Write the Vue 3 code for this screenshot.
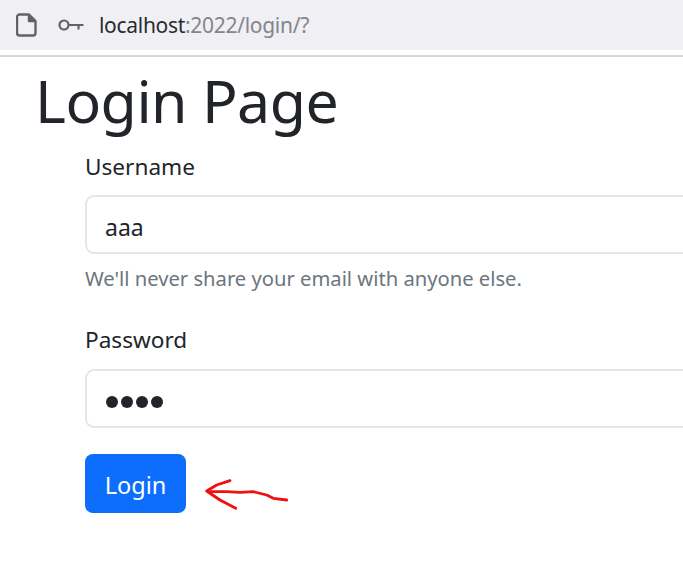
<script setup>
const username = 'aaa'
</script>

<template>
  <div class="page">
    <div class="browser-bar">
      <svg class="doc-icon" width="21" height="24" viewBox="0 0 21 24" fill="none" stroke="#5f6368" stroke-width="2.400" stroke-linejoin="round">
        <path d="M3.500 1.500h9.500l6.500 6.500v12a2.500 2.500 0 0 1-2.500 2.500h-13.500a2.500 2.500 0 0 1-2.500-2.500v-16a2.500 2.500 0 0 1 2.500-2.500z" />
        <path d="M13 1.500v6.500h6.500" fill="#5f6368" />
      </svg>
      <svg class="key-icon" width="26" height="14" viewBox="0 0 26 14" fill="none" stroke="#5f6368" stroke-width="2.200">
        <circle cx="6" cy="7" r="4.500" />
        <path d="M10.500 7h15M20.500 7v4.500" />
      </svg>
      <div class="url"><span class="host">localhost</span><span class="rest">:2022/login/?</span></div>
    </div>
    <div class="rule"></div>
    <h1 class="title">Login Page</h1>
    <form class="form">
      <label class="label">Username</label>
      <div class="input text">{{ username }}</div>
      <div class="help">We'll never share your email with anyone else.</div>
      <label class="label second">Password</label>
      <div class="input dots"><i></i><i></i><i></i><i></i></div>
      <div class="actions">
        <button type="button" class="btn"><span>Login</span></button>
        <svg class="arrow" width="90" height="40" viewBox="0 0 90 40" fill="none" stroke="#f01010" stroke-width="2.800" stroke-linecap="round" stroke-linejoin="round">
          <path d="M25 6.700 L11.700 11 L1.700 17 L15 26 L30.700 34.300" />
          <path d="M3.300 17.700 L21.700 17.700 L35 18.300 L48.300 17.700 L61.700 21 L68.300 24.300 L81.700 26" />
        </svg>
      </div>
    </form>
  </div>
</template>

<style>
html, body { margin: 0; background: #fff; overflow: hidden; }
</style>

<style scoped>
.page {
  width: 683px;
  height: 563px;
  overflow: hidden;
  background: #fff;
  font-family: "Noto Sans", "Open Sans", sans-serif;
  color: #212529;
}
.browser-bar {
  height: 50px;
  background: #efeff4;
  display: flex;
  align-items: center;
  padding-left: 16px;
}
.doc-icon { margin-right: 21px; }
.key-icon { margin-right: 15px; }
.url { font-size: 21px; letter-spacing: -0.3px; }
.host { color: #2b2b2f; }
.rest { color: #85858a; }
.rule {
  height: 2px;
  margin-top: 5px;
  background: #d6d6d6;
}
.title {
  margin: 5px 0 0 35px;
  font-size: 59px;
  line-height: 76px;
  font-weight: 400;
  letter-spacing: -0.500px;
}
.form {
  margin: 0 0 0 85px;
  display: flex;
  flex-direction: column;
  align-items: flex-start;
}
.label { font-size: 22.600px; line-height: 34px; margin-top: 12px; }
.label.second { margin-top: 30px; margin-bottom: 1px; }
.input {
  box-sizing: border-box;
  width: 640px;
  height: 59px;
  margin-top: 11px;
  padding-left: 18px;
  border: 2px solid #e3e6ea;
  border-radius: 9px;
  background: #fff;
  display: flex;
  align-items: center;
  font-size: 23px;
}
.text { padding-top: 5px; }
.dots { gap: 3px; padding-top: 7px; padding-left: 19px; }
.dots i { width: 12px; height: 12px; border-radius: 50%; background: #212529; }
.help { font-size: 20.200px; line-height: 30px; margin-top: 9px; color: #6c757d; }
.actions { display: flex; align-items: flex-start; margin-top: 26px; }
.btn {
  width: 101px;
  height: 59px;
  border: none;
  border-radius: 8px;
  background: #0d6efd;
  color: #fff;
  font: inherit;
  font-size: 23.500px;
  padding: 2px 0 0;
}
.arrow { margin: 20px 0 0 19px; }
</style>
